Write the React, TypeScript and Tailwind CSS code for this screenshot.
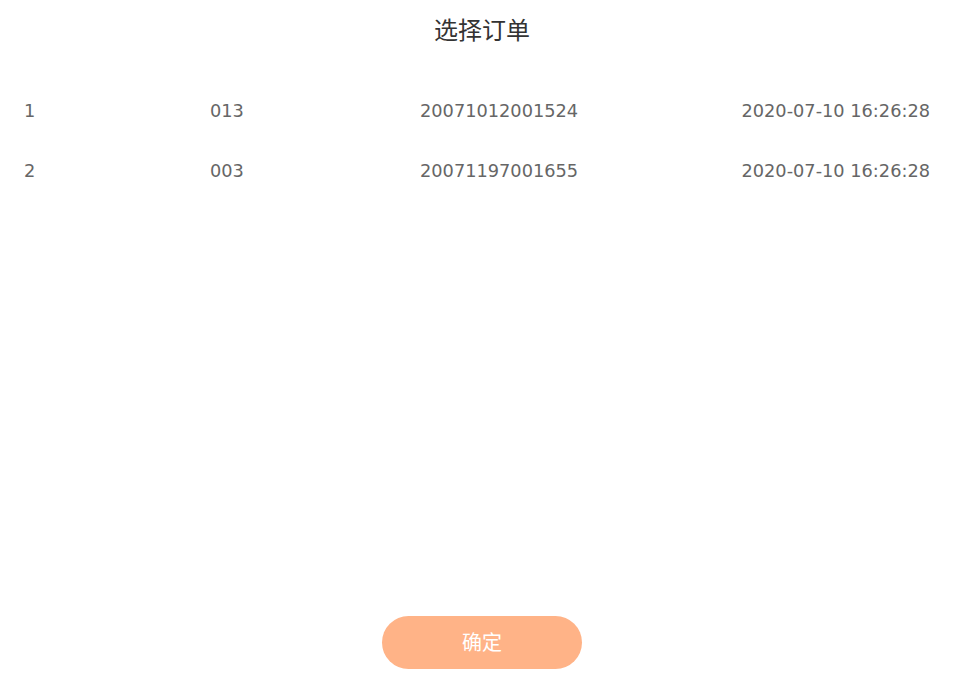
const orders = [
  { idx: '1', code: '013', no: '20071012001524', time: '2020-07-10 16:26:28' },
  { idx: '2', code: '003', no: '20071197001655', time: '2020-07-10 16:26:28' },
]

export default function App() {
  return (
    <div
      className="w-[964px] h-[696px] bg-white flex flex-col"
      style={{ fontFamily: '"DejaVu Sans", "Noto Sans CJK SC", sans-serif' }}
    >
      <div className="h-[62px] flex items-center justify-center text-[24px] text-[#333]">
        选择订单
      </div>
      <div className="flex flex-col pt-[19px] pl-[24px] pr-[34px]">
        {orders.map(o => (
          <div key={o.idx} className="h-[60px] flex items-center text-[17.75px] text-[#666]">
            <div className="w-[186px]">{o.idx}</div>
            <div className="w-[210px]">{o.code}</div>
            <div className="flex-1">{o.no}</div>
            <div>{o.time}</div>
          </div>
        ))}
      </div>
      <div className="flex-1" />
      <div className="flex justify-center pb-[27px]">
        <button className="w-[200px] h-[53px] rounded-full bg-[#ffb387] text-white text-[20px]">
          确定
        </button>
      </div>
    </div>
  )
}
